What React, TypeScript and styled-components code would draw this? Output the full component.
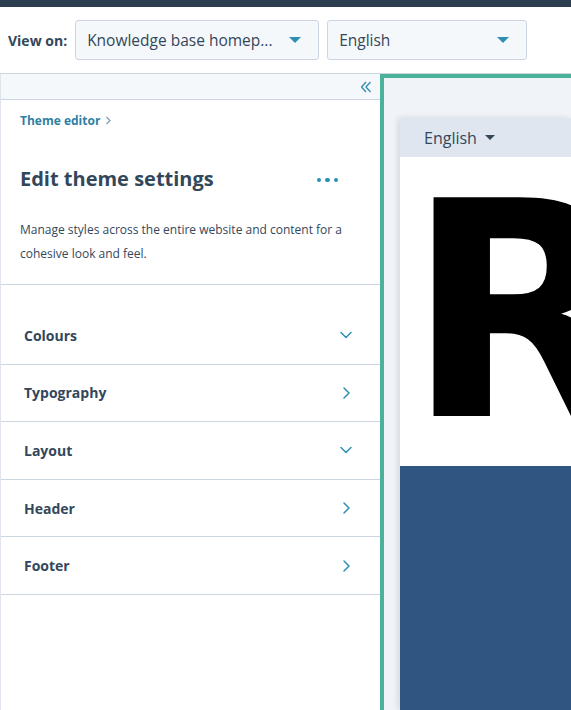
import React from 'react';
import styled, { createGlobalStyle } from 'styled-components';

const GlobalStyle = createGlobalStyle`
  html, body {
    margin: 0;
    padding: 0;
    height: 100%;
    overflow: hidden;
  }
  body {
    font-family: "Open Sans", "Liberation Sans", sans-serif;
    color: #33475b;
    background: #ffffff;
  }
  #root {
    height: 100%;
  }
`;

const Page = styled.div`
  display: flex;
  flex-direction: column;
  height: 710px;
  width: 571px;
  overflow: hidden;
`;

const TopBar = styled.div`
  height: 7px;
  background: #2d3e50;
  flex-shrink: 0;
`;

const Toolbar = styled.div`
  display: flex;
  align-items: center;
  gap: 8px;
  height: 66px;
  padding: 0 8px;
  border-bottom: 1px solid #cbd6e2;
  flex-shrink: 0;
`;

const ViewLabel = styled.span`
  font-size: 14px;
  font-weight: 700;
`;

const Select = styled.div<{ $width: number }>`
  display: flex;
  align-items: center;
  justify-content: space-between;
  box-sizing: border-box;
  width: ${p => p.$width}px;
  height: 40px;
  padding: 0 17px 0 11px;
  background: #f5f8fa;
  border: 1px solid #cbd6e2;
  border-radius: 3px;
  font-size: 15.5px;
  color: #33475b;
`;

const Caret = styled.span`
  width: 0;
  height: 0;
  border-left: 6px solid transparent;
  border-right: 6px solid transparent;
  border-top: 6px solid #2e8fb3;
`;

const Body = styled.div`
  display: flex;
  flex: 1;
  min-height: 0;
`;

const Sidebar = styled.aside`
  width: 380px;
  flex-shrink: 0;
  display: flex;
  flex-direction: column;
  border-left: 1px solid #dfe3eb;
  box-sizing: border-box;
`;

const CollapseStrip = styled.div`
  display: flex;
  justify-content: flex-end;
  align-items: center;
  height: 25px;
  padding-right: 8px;
  background: #f5f8fa;
  border-bottom: 1px solid #cbd6e2;
`;

const Intro = styled.div`
  padding: 12px 20px 18px 19px;
  border-bottom: 1px solid #cbd6e2;
`;

const Breadcrumb = styled.div`
  display: flex;
  align-items: center;
  gap: 5px;
  font-size: 12px;
  font-weight: 700;
  color: #2f7fa3;
`;

const TitleRow = styled.div`
  display: flex;
  align-items: center;
  justify-content: space-between;
  margin-top: 36px;
  padding-right: 22px;
`;

const Title = styled.h1`
  margin: 0;
  font-size: 20px;
  font-weight: 700;
  color: #33475b;
`;

const Dots = styled.div`
  display: flex;
  gap: 4px;
  margin-top: 3px;
`;

const Dot = styled.span`
  width: 4.5px;
  height: 4.5px;
  border-radius: 50%;
  background: #2e8fb3;
`;

const Description = styled.p`
  margin: 26px 0 0;
  font-size: 12px;
  line-height: 24px;
  color: #33475b;
`;

const List = styled.div`
  padding-top: 22px;
`;

const Row = styled.div`
  display: flex;
  align-items: center;
  justify-content: space-between;
  height: 56.6px;
  padding: 0 27px 0 23px;
  border-bottom: 1px solid #cbd6e2;
  font-size: 14px;
  font-weight: 700;
  color: #33475b;
`;

const Preview = styled.section`
  flex: 1;
  display: flex;
  flex-direction: column;
  background: #f0f4f8;
  border-top: 4px solid #4bb19b;
  border-left: 4px solid #4bb19b;
  padding: 40px 0 0 16px;
  overflow: hidden;
`;

const Frame = styled.div`
  flex: 1;
  display: flex;
  flex-direction: column;
  background: #ffffff;
  box-shadow: -2px 0 6px rgba(0, 0, 0, 0.12);
  overflow: hidden;
`;

const FrameHeader = styled.div`
  display: flex;
  align-items: center;
  gap: 8px;
  height: 39px;
  padding-left: 24px;
  background: #dfe6ef;
  font-size: 16px;
  color: #33475b;
  flex-shrink: 0;
`;

const SmallCaret = styled.span`
  width: 0;
  height: 0;
  border-left: 5px solid transparent;
  border-right: 5px solid transparent;
  border-top: 5px solid #33475b;
`;

const LogoArea = styled.div`
  height: 309px;
  flex-shrink: 0;
  overflow: hidden;
  position: relative;
`;

const LogoLetter = styled.span`
  position: absolute;
  left: 6px;
  top: 46px;
  font-family: "DejaVu Sans", sans-serif;
  font-weight: 700;
  font-size: 300px;
  line-height: 0.73;
  color: #000000;
`;

const Hero = styled.div`
  flex: 1;
  background: #2f5680;
`;

const ChevronDown = () => (
  <svg width="14" height="14" viewBox="0 0 14 14" fill="none">
    <path d="M2 4.5 L7 9.5 L12 4.5" stroke="#2e8fb3" strokeWidth="1.5" strokeLinecap="round" strokeLinejoin="round" />
  </svg>
);

const ChevronRight = () => (
  <svg width="14" height="14" viewBox="0 0 14 14" fill="none">
    <path d="M5 2 L10 7 L5 12" stroke="#2e8fb3" strokeWidth="1.5" strokeLinecap="round" strokeLinejoin="round" />
  </svg>
);

const DoubleLeft = () => (
  <svg width="12" height="12" viewBox="0 0 12 12" fill="none">
    <path d="M6 1 L1.5 6 L6 11 M10.5 1 L6 6 L10.5 11" stroke="#2e8fb3" strokeWidth="1.3" strokeLinejoin="round" />
  </svg>
);

const SmallChevron = () => (
  <svg width="7" height="9" viewBox="0 0 7 9" fill="none">
    <path d="M1.5 1 L5 4.5 L1.5 8" stroke="#7c98b6" strokeWidth="1.2" />
  </svg>
);

const sections = [
  { label: 'Colours', open: true },
  { label: 'Typography', open: false },
  { label: 'Layout', open: true },
  { label: 'Header', open: false },
  { label: 'Footer', open: false },
];

const App: React.FC = () => {
  return (
    <>
      <GlobalStyle />
      <Page>
        <TopBar />
        <Toolbar>
          <ViewLabel>View on:</ViewLabel>
          <Select $width={244}>
            <span>Knowledge base homep...</span>
            <Caret />
          </Select>
          <Select $width={200}>
            <span>English</span>
            <Caret />
          </Select>
        </Toolbar>
        <Body>
          <Sidebar>
            <CollapseStrip>
              <DoubleLeft />
            </CollapseStrip>
            <Intro>
              <Breadcrumb>
                Theme editor <SmallChevron />
              </Breadcrumb>
              <TitleRow>
                <Title>Edit theme settings</Title>
                <Dots>
                  <Dot />
                  <Dot />
                  <Dot />
                </Dots>
              </TitleRow>
              <Description>
                Manage styles across the entire website and content for a cohesive look and feel.
              </Description>
            </Intro>
            <List>
              {sections.map(s => (
                <Row key={s.label}>
                  {s.label}
                  {s.open ? <ChevronDown /> : <ChevronRight />}
                </Row>
              ))}
            </List>
          </Sidebar>
          <Preview>
            <Frame>
              <FrameHeader>
                English <SmallCaret />
              </FrameHeader>
              <LogoArea>
                <LogoLetter>R</LogoLetter>
              </LogoArea>
              <Hero />
            </Frame>
          </Preview>
        </Body>
      </Page>
    </>
  );
};

export default App;
